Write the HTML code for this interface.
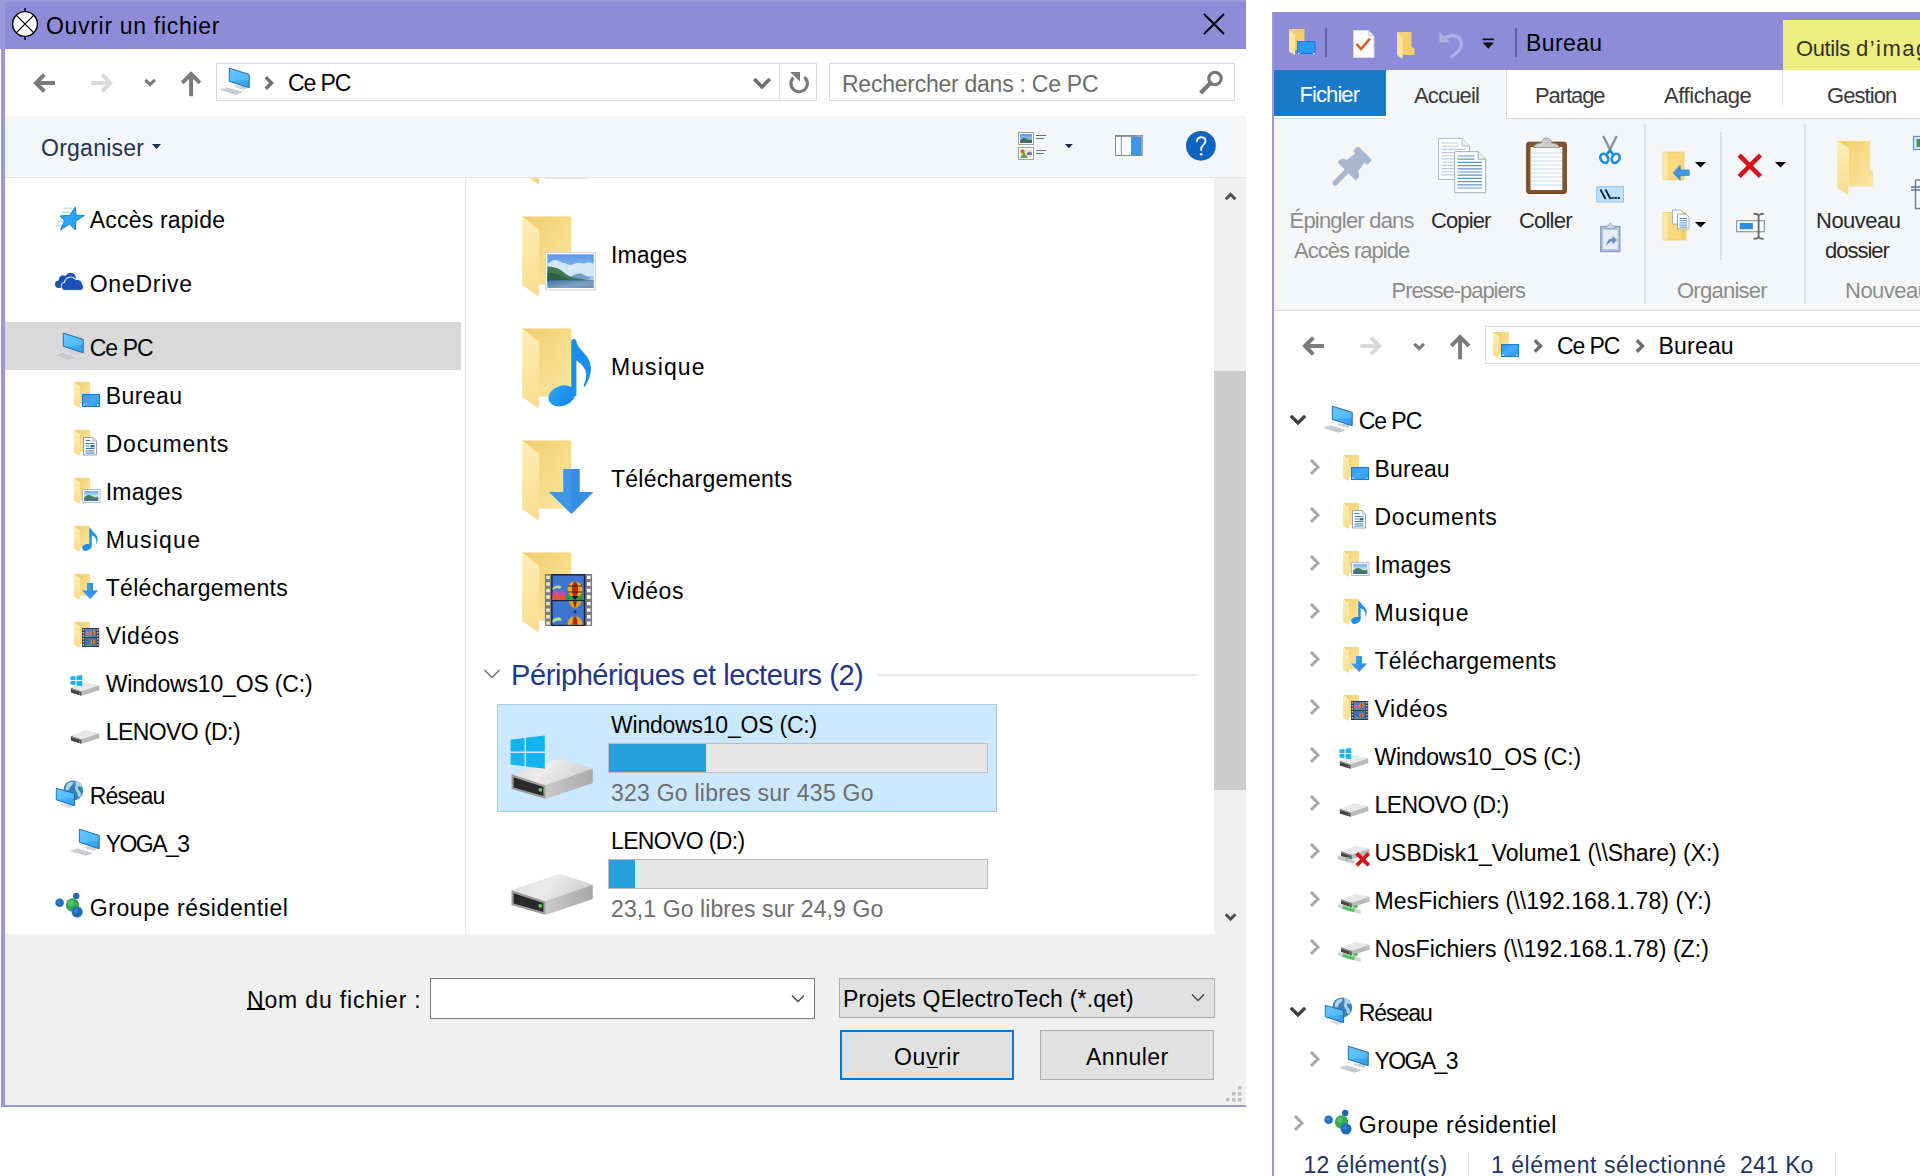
<!DOCTYPE html>
<html><head><meta charset="utf-8"><title>Ouvrir un fichier</title>
<style>
html,body{margin:0;padding:0;}
html{width:1920px;height:1176px;overflow:hidden;}
body{width:1920px;height:1176px;position:relative;overflow:hidden;background:#fff;
font-family:"Liberation Sans",sans-serif;}
div,span.t,svg{position:absolute;}
#root{left:0;top:0;width:1920px;height:1176px;overflow:hidden;}
span.t{white-space:pre;}
svg{overflow:visible;}
</style></head>
<body>
<div id="root">
<svg width="0" height="0" style="left:0;top:0"><defs>
<linearGradient id="gFold" x1="0" y1="0" x2="1" y2="1"><stop offset="0" stop-color="#f1cd6a"/><stop offset="1" stop-color="#fbe7a3"/></linearGradient>
<linearGradient id="gFlap" x1="0" y1="0" x2="0" y2="1"><stop offset="0" stop-color="#fdeeb6"/><stop offset="1" stop-color="#f8dc8c"/></linearGradient>
<linearGradient id="gMon" x1="0" y1="0" x2="1" y2="1"><stop offset="0" stop-color="#5cc4fb"/><stop offset="1" stop-color="#2a9bf0"/></linearGradient>
<linearGradient id="gDrv" x1="0" y1="0" x2="1" y2="0.300"><stop offset="0" stop-color="#dedede"/><stop offset="0.500" stop-color="#ebebeb"/><stop offset="1" stop-color="#d2d2d2"/></linearGradient>
<linearGradient id="gSky" x1="0" y1="0" x2="0" y2="1"><stop offset="0" stop-color="#5aa9e8"/><stop offset="0.5" stop-color="#cfe6f5"/><stop offset="1" stop-color="#3d6f8f"/></linearGradient>
<linearGradient id="gDesk" x1="0" y1="0" x2="1" y2="1"><stop offset="0" stop-color="#2a95f4"/><stop offset="0.500" stop-color="#43aafb"/><stop offset="1" stop-color="#2a95f4"/></linearGradient>
<linearGradient id="gSky2" x1="0" y1="0" x2="0" y2="1"><stop offset="0" stop-color="#5c98e6"/><stop offset="0.45" stop-color="#86b8f0"/><stop offset="1" stop-color="#b8d6f4"/></linearGradient>
<linearGradient id="gWater" x1="0" y1="0" x2="1" y2="1"><stop offset="0" stop-color="#3f73ad"/><stop offset="0.600" stop-color="#7fa1c4"/><stop offset="1" stop-color="#6a92bd"/></linearGradient>
<linearGradient id="gNote" x1="0" y1="0" x2="1" y2="1"><stop offset="0" stop-color="#2fa3f6"/><stop offset="1" stop-color="#0f86e6"/></linearGradient>
<linearGradient id="gDrvS" x1="0" y1="0" x2="1" y2="0"><stop offset="0" stop-color="#c9c9c9"/><stop offset="1" stop-color="#a9a9a9"/></linearGradient>
</defs></svg>
<div style="left:1px;top:0px;width:1245px;height:1107px;background:#9b98d6;"></div>
<div style="left:5px;top:48px;width:1241px;height:1057px;background:#fff;"></div>
<div style="left:0px;top:0px;width:1246px;height:49px;background:#8e8cd8;"></div>
<div style="left:0px;top:0px;width:1246px;height:2px;background:#9a97db;"></div>
<div style="left:0px;top:0px;width:5px;height:49px;background:#9a97db;"></div>
<svg style="left:9px;top:8px;" width="32" height="32" viewBox="0 0 32 32"><path d="M16 0v32" stroke="#1b1b50" stroke-width="2"/><circle cx="16" cy="16" r="12.400" fill="#fff" stroke="#000" stroke-width="1.400"/><path d="M7.400 7.400l17.200 17.200M24.600 7.400L7.400 24.600" stroke="#000" stroke-width="1.300"/></svg>
<span class="t" style="left:46.00px;top:12px;font-size:23px;line-height:29px;color:#000;letter-spacing:0.688px;">Ouvrir un fichier</span>
<svg style="left:1203px;top:13px;" width="22" height="22" viewBox="0 0 22 22"><path d="M1 1l20 20M21 1L1 21" stroke="#000" stroke-width="1.9"/></svg>
<svg style="left:32.9px;top:70.75px;" width="24" height="24" viewBox="0 0 24 24"><path d="M22 12H3.500M11.300 3.700L3 12l8.300 8.300" fill="none" stroke="#7a7a7a" stroke-width="4"/></svg>
<svg style="left:91.0px;top:70.75px;" width="24" height="24" viewBox="0 0 24 24"><path d="M0.300 12H18.800M11 3.700L19.300 12 11 20.300" fill="none" stroke="#d9d9d9" stroke-width="4"/></svg>
<svg style="left:143.9px;top:78.25px;" width="14" height="10" viewBox="0 0 14 10"><path d="M1.300 1.800L6.100 6.600l4.800-4.800" fill="none" stroke="#7a7a7a" stroke-width="3.200"/></svg>
<svg style="left:179.8px;top:70.75px;" width="24" height="26" viewBox="0 0 24 26"><path d="M11.100 25.200V3.500M2.300 11.800l8.800-8.800 8.800 8.800" fill="none" stroke="#7a7a7a" stroke-width="4"/></svg>
<div style="left:216px;top:63px;width:564px;height:38px;background:#fff;border:1px solid #d9d9d9;box-sizing:border-box;"></div>
<div style="left:780px;top:63px;width:37px;height:38px;background:#fff;border:1px solid #d9d9d9;border-left:none;box-sizing:border-box;"></div>
<svg style="left:221.5px;top:66px;" width="32" height="32" viewBox="0 0 32 32"><polygon points="-2.8,23.4 4.6,21 21.7,25.8 14.2,28.8" fill="#e6e8eb"/><path d="M-1 23.7l15 4.500M1.500 22.800l15 4.600M4 22l15 4.600M1 24.800l6.500-2.600M5 26l6.500-2.600M9 27.200l6.500-2.600M12.500 28.300l6.500-2.600" stroke="#b3b8bf" stroke-width="0.700"/><polygon points="19.500,19.200 23.500,20.400 23.500,23 19.500,21.800" fill="#c3c8ce"/><polygon points="12.800,20.600 16,19.600 24.500,22 21.300,23.400" fill="#d5d8dd" stroke="#b5bac1" stroke-width="0.500"/><polygon points="7.300,2.200 27.200,8.400 27.200,21.700 7.300,15.300" fill="url(#gMon)" stroke="#1d6cab" stroke-width="1"/><polygon points="7.800,3 26.700,8.900 26.700,14 7.800,15" fill="#7fd4ff" opacity="0.350"/></svg>
<svg style="left:263.7px;top:75px;" width="12" height="16" viewBox="0 0 12 16"><path d="M1.800 2.300L7.500 8l-5.700 5.700" fill="none" stroke="#6e6e6e" stroke-width="3.400"/></svg>
<span class="t" style="left:288.00px;top:69px;font-size:23px;line-height:29px;color:#000;letter-spacing:-1.125px;">Ce PC</span>
<svg style="left:752px;top:76px;" width="20" height="14" viewBox="0 0 20 14"><path d="M2.200 3l7.800 8 7.800-8" fill="none" stroke="#6e6e6e" stroke-width="3.600"/></svg>
<svg style="left:788px;top:70px;" width="24" height="24" viewBox="0 0 24 24"><path d="M16.300 6.900A8.300 8.300 0 1 1 5.300 7.600" fill="none" stroke="#7a7a7a" stroke-width="3.200"/><path d="M2 2h10v9.500z" fill="#7a7a7a"/></svg>
<div style="left:829px;top:63px;width:406px;height:38px;background:#fff;border:1px solid #d9d9d9;box-sizing:border-box;"></div>
<span class="t" style="left:842.00px;top:70px;font-size:23px;line-height:29px;color:#6d6d6d;letter-spacing:-0.250px;">Rechercher dans : Ce PC</span>
<svg style="left:1198px;top:70px;" width="26" height="26" viewBox="0 0 26 26"><circle cx="17" cy="8.500" r="6.200" fill="none" stroke="#787878" stroke-width="3.200"/><path d="M12.500 13L2.500 23" stroke="#787878" stroke-width="4"/></svg>
<div style="left:5px;top:116px;width:1241px;height:61px;background:#f5f6f7;"></div>
<div style="left:5px;top:177px;width:1241px;height:1px;background:#e3e4e6;"></div>
<span class="t" style="left:41.00px;top:134px;font-size:23px;line-height:29px;color:#1e3250;letter-spacing:0.250px;">Organiser</span>
<svg style="left:152px;top:144px;" width="9" height="5" viewBox="0 0 9 5"><path d="M0 0h9L4.500 5z" fill="#1e3250"/></svg>
<svg style="left:1018px;top:132px;" width="30" height="28" viewBox="0 0 30 28"><rect x="0.500" y="0.500" width="15" height="12" fill="#fff" stroke="#9aa0a8"/><rect x="2" y="2" width="12" height="9" fill="url(#gSky2)"/><path d="M2 8.500q3-4 6-2t6 1v3.500H2z" fill="#3f6f63"/><rect x="0.500" y="15.500" width="15" height="12" fill="#fff" stroke="#9aa0a8"/><rect x="2" y="17" width="12" height="9" fill="#e9e6c8"/><circle cx="4.500" cy="19.500" r="2" fill="#c9642b"/><path d="M2 26l4-6 4 6z" fill="#6fa34f"/><path d="M9 21l3-1.500 2 1.500v2h-5z" fill="#7a68b8"/><path d="M18 3.500h10M18 6.500h8M18 18.500h10M18 21.500h8" stroke="#707070" stroke-width="1"/></svg>
<svg style="left:1064.7px;top:143.9px;" width="8" height="5" viewBox="0 0 8 5"><path d="M0 0h7.800L3.900 4.300z" fill="#1b2a4a"/></svg>
<svg style="left:1115px;top:135px;" width="28" height="22" viewBox="0 0 28 22"><rect x="0.500" y="0.500" width="26.700" height="20" fill="#fff" stroke="#858a92" stroke-width="1"/><path d="M0 1h27.700" stroke="#858a92" stroke-width="1.800"/><path d="M6.300 1v20" stroke="#858a92" stroke-width="1"/><rect x="16" y="2" width="10.700" height="18" fill="#3f97e3"/><path d="M22 1h5" stroke="#dfe6ee" stroke-width="0.800" stroke-dasharray="1 0.700"/></svg>
<svg style="left:1186px;top:131px;" width="30" height="30" viewBox="0 0 30 30"><circle cx="14.900" cy="14.800" r="14.900" fill="#0f64c0"/><path d="M10.800 10.800c0-2.800 1.800-4.600 4.400-4.600 2.500 0 4.300 1.500 4.300 3.800 0 3.600-4.300 4.200-4.300 8v1.800" fill="none" stroke="#fff" stroke-width="1.900"/><circle cx="15.200" cy="23.300" r="1.350" fill="#fff"/></svg>
<div style="left:465px;top:178px;width:1px;height:756px;background:#ececec;"></div>
<div style="left:5px;top:322px;width:456px;height:48px;background:#d9d9d9;"></div>
<span class="t" style="left:89.70px;top:206px;font-size:23px;line-height:29px;color:#000;letter-spacing:0.209px;">Accès rapide</span>
<svg style="left:56px;top:203px;" width="32" height="32" viewBox="0 0 32 32"><path d="M8.300 5.300h9M6.500 9.500h8M2 18.400h6.500M0 22.400h6" stroke="#9fb4bd" stroke-width="0.900"/><path d="M8.300 5.300h9M6.500 9.500h8M2 18.400h6.500M0 22.400h6" stroke="#c8f2ff" stroke-width="2.600" opacity="0.500"/><polygon points="19.200,4.100 20,12.300 28.400,12.500 19.900,18.100 19.300,26.900 13.600,21.100 4.500,26.900 8.600,17.700 4.200,13 13.900,12.300" fill="#2aa5f5" stroke="#1d7fc8" stroke-width="1" stroke-linejoin="miter"/></svg>
<span class="t" style="left:89.70px;top:270px;font-size:23px;line-height:29px;color:#000;letter-spacing:0.757px;">OneDrive</span>
<svg style="left:56px;top:267px;" width="32" height="32" viewBox="0 0 32 32"><g fill="#1b50b5"><circle cx="2.700" cy="17.200" r="3.700"/><circle cx="7.200" cy="12.600" r="4.300"/><circle cx="14.500" cy="11" r="5.300"/><rect x="2.700" y="13" width="14" height="7.900"/></g><g fill="#e4f1fb" stroke="#e4f1fb" stroke-width="2"><circle cx="9.300" cy="19.300" r="3.600"/><circle cx="14.600" cy="16.400" r="5.800"/><circle cx="21.300" cy="17.600" r="4.600"/><circle cx="24" cy="20" r="2.900"/><rect x="9.300" y="18" width="14.700" height="4.900"/></g><g fill="#1b50b5"><circle cx="9.300" cy="19.300" r="3.600"/><circle cx="14.600" cy="16.400" r="5.800"/><circle cx="21.300" cy="17.600" r="4.600"/><circle cx="24" cy="20" r="2.900"/><rect x="9.300" y="18" width="14.700" height="4.900"/></g></svg>
<span class="t" style="left:89.70px;top:334px;font-size:23px;line-height:29px;color:#000;letter-spacing:-0.925px;">Ce PC</span>
<svg style="left:56px;top:331px;" width="32" height="32" viewBox="0 0 32 32"><polygon points="-2.8,23.4 4.6,21 21.7,25.8 14.2,28.8" fill="#e6e8eb"/><path d="M-1 23.7l15 4.500M1.500 22.800l15 4.600M4 22l15 4.600M1 24.800l6.500-2.600M5 26l6.500-2.600M9 27.200l6.500-2.600M12.500 28.300l6.500-2.600" stroke="#b3b8bf" stroke-width="0.700"/><polygon points="19.500,19.200 23.500,20.400 23.500,23 19.500,21.800" fill="#c3c8ce"/><polygon points="12.800,20.600 16,19.600 24.500,22 21.300,23.400" fill="#d5d8dd" stroke="#b5bac1" stroke-width="0.500"/><polygon points="7.300,2.200 27.200,8.400 27.200,21.700 7.300,15.300" fill="url(#gMon)" stroke="#1d6cab" stroke-width="1"/><polygon points="7.800,3 26.700,8.900 26.700,14 7.800,15" fill="#7fd4ff" opacity="0.350"/></svg>
<span class="t" style="left:105.70px;top:382px;font-size:23px;line-height:29px;color:#000;letter-spacing:0.460px;">Bureau</span>
<svg style="left:72px;top:379px;" width="32" height="32" viewBox="0 0 32 32"><polygon points="2,3 18,3 18,25 8,25 8,8" fill="url(#gFold)"/><polygon points="2,3 8,8.5 8,29 2,26" fill="url(#gFlap)"/><rect x="10.5" y="15.5" width="17" height="12" fill="url(#gDesk)" stroke="#157ad8" stroke-width="1"/><rect x="11.5" y="25.6" width="1.6" height="1" fill="#fff"/><rect x="25" y="25.6" width="1.6" height="1" fill="#fff"/></svg>
<span class="t" style="left:105.70px;top:430px;font-size:23px;line-height:29px;color:#000;letter-spacing:0.787px;">Documents</span>
<svg style="left:72px;top:427px;" width="32" height="32" viewBox="0 0 32 32"><polygon points="2,3 18,3 18,25 8,25 8,8" fill="url(#gFold)"/><polygon points="2,3 8,8.5 8,29 2,26" fill="url(#gFlap)"/><path d="M11.5 10.5h9.5l3.5 3.5v14h-13z" fill="#fff" stroke="#9aa3ad" stroke-width="1"/><path d="M21 10.5v3.5h3.5" fill="#e8ecf0" stroke="#9aa3ad" stroke-width="0.8"/><path d="M13.5 13.5h5M13.5 16.5h9M13.5 19h4M13.5 21.5h9M13.5 24h9M13.5 26h9" stroke="#3f7fbf" stroke-width="1"/><rect x="18.5" y="18" width="4" height="2.4" fill="#2b6cb5"/></svg>
<span class="t" style="left:105.70px;top:478px;font-size:23px;line-height:29px;color:#000;letter-spacing:0.260px;">Images</span>
<svg style="left:72px;top:475px;" width="32" height="32" viewBox="0 0 32 32"><polygon points="2,3 18,3 18,25 8,25 8,8" fill="url(#gFold)"/><polygon points="2,3 8,8.5 8,29 2,26" fill="url(#gFlap)"/><rect x="10.500" y="14.500" width="17.500" height="13" fill="#fff" stroke="#b5bcc4" stroke-width="1"/><rect x="12.200" y="16.200" width="14.100" height="9.600" fill="url(#gSky)"/><path d="M12.200 22.500q4-4 7.500-1.500t6.600.5v2.500h-14.100z" fill="#4d7d5b"/><rect x="12.200" y="23.900" width="14.100" height="1.900" fill="#3f6f96"/></svg>
<span class="t" style="left:105.70px;top:526px;font-size:23px;line-height:29px;color:#000;letter-spacing:1.217px;">Musique</span>
<svg style="left:72px;top:523px;" width="32" height="32" viewBox="0 0 32 32"><polygon points="2,3 18,3 18,25 8,25 8,8" fill="url(#gFold)"/><polygon points="2,3 8,8.5 8,29 2,26" fill="url(#gFlap)"/><ellipse cx="14.600" cy="24.300" rx="4.500" ry="3.300" transform="rotate(-22 14.600 24.300)" fill="#1e90ea"/><path d="M17.300 24.500V5.200c1.200 0 2 .3 2.400 1.600.7 2.200 3.800 3.600 5.300 6.600 1.300 2.800.6 5.400-1 7.600.6-2.500.6-4.600-.9-6.600-1.100-1.500-2.400-2-3.400-2.500v12.500z" fill="#1e90ea"/></svg>
<span class="t" style="left:105.70px;top:574px;font-size:23px;line-height:29px;color:#000;letter-spacing:0.307px;">Téléchargements</span>
<svg style="left:72px;top:571px;" width="32" height="32" viewBox="0 0 32 32"><polygon points="2,3 18,3 18,25 8,25 8,8" fill="url(#gFold)"/><polygon points="2,3 8,8.5 8,29 2,26" fill="url(#gFlap)"/><path d="M15 12h6v7.500h5L18 28l-8-8.500h5z" fill="#3f97ea"/><path d="M18 12h3v7.500h5L18 28z" fill="#3088e0" opacity="0.550"/></svg>
<span class="t" style="left:105.70px;top:622px;font-size:23px;line-height:29px;color:#000;letter-spacing:0.660px;">Vidéos</span>
<svg style="left:72px;top:619px;" width="32" height="32" viewBox="0 0 32 32"><polygon points="2,3 18,3 18,25 8,25 8,8" fill="url(#gFold)"/><polygon points="2,3 8,8.5 8,29 2,26" fill="url(#gFlap)"/><rect x="10" y="9" width="17.200" height="19" fill="#3a3a3a"/><rect x="12.800" y="10" width="11.600" height="8" fill="#4a7fd0"/><rect x="12.800" y="19" width="11.600" height="8" fill="#3e6fc4"/><path d="M12.800 14l2.500-2 2.500 2.500 2-1.500v3h-7z" fill="#c560c0"/><ellipse cx="20.500" cy="13.500" rx="2.200" ry="2.600" fill="#d9a520"/><ellipse cx="20.500" cy="13.500" rx="0.900" ry="2.600" fill="#c03030"/><ellipse cx="20.500" cy="23" rx="2.200" ry="2.600" fill="#d9a520"/><ellipse cx="20.500" cy="23" rx="0.900" ry="2.600" fill="#c03030"/><path d="M12.800 18q3-3 5.800-1t5.800 0v1z" fill="#5aa86a"/><path d="M12.800 27q3-3 5.800-1t5.800 0v1z" fill="#5aa86a"/><path d="M11.400 10v17.500M25.800 10v17.500" stroke="#cfcfcf" stroke-width="1.400" stroke-dasharray="1.600 1.400"/></svg>
<span class="t" style="left:105.70px;top:670px;font-size:23px;line-height:29px;color:#000;letter-spacing:-0.169px;">Windows10_OS (C:)</span>
<svg style="left:72px;top:667px;" width="32" height="32" viewBox="0 0 32 32"><g transform="translate(0.0 0.0)"><polygon points="-1.100,21 13.400,15.600 27.200,18.500 27.200,23 9.400,28.700 -1.100,25.500" fill="#c9c9c9"/><polygon points="-1.100,21 13.400,15.600 27.200,18.500 9.400,24.500" fill="#e8e8e8"/><polygon points="9.400,24.500 27.200,18.500 27.200,23 9.400,28.700" fill="#b9b9b9"/><polygon points="-1.100,21 9.400,24.500 9.400,28.700 -1.100,25.500" fill="#444"/><polygon points="-1.100,21 9.400,24.500 9.400,25.600 -1.100,22.100" fill="#9a9a9a"/><circle cx="7.600" cy="26.600" r="0.700" fill="#5fdc5f"/></g><g fill="#17b5ef"><polygon points="-1.500,9.600 3.500,8.900 3.500,13 -1.500,13"/><polygon points="4.500,8.800 10.200,8 10.200,13 4.500,13"/><polygon points="-1.500,14 3.500,14 3.500,18.200 -1.500,17.500"/><polygon points="4.500,14 10.200,14 10.200,19.200 4.500,18.400"/></g></svg>
<span class="t" style="left:105.70px;top:718px;font-size:23px;line-height:29px;color:#000;letter-spacing:-0.570px;">LENOVO (D:)</span>
<svg style="left:72px;top:715px;" width="32" height="32" viewBox="0 0 32 32"><g transform="translate(0.0 0.0)"><polygon points="-1.100,21 13.400,15.600 27.200,18.500 27.200,23 9.400,28.700 -1.100,25.500" fill="#c9c9c9"/><polygon points="-1.100,21 13.400,15.600 27.200,18.500 9.400,24.500" fill="#e8e8e8"/><polygon points="9.400,24.500 27.200,18.500 27.200,23 9.400,28.700" fill="#b9b9b9"/><polygon points="-1.100,21 9.400,24.500 9.400,28.700 -1.100,25.500" fill="#444"/><polygon points="-1.100,21 9.400,24.500 9.400,25.600 -1.100,22.100" fill="#9a9a9a"/><circle cx="7.600" cy="26.600" r="0.700" fill="#5fdc5f"/></g></svg>
<span class="t" style="left:89.70px;top:782px;font-size:23px;line-height:29px;color:#000;letter-spacing:-0.740px;">Réseau</span>
<svg style="left:56px;top:779px;" width="32" height="32" viewBox="0 0 32 32"><circle cx="17.200" cy="11.400" r="10" fill="#3a81b4"/><path d="M10.500 6c2.500-3 5-3.500 7-3 .5 2-1.500 3-3 4.500s-1 3.500-3 4-2.500-1.500-1-5.500zM19 2c3 0 6 2 7.500 5.500-1.500 1-2.500-.5-4 0s-.5 3 1 4.500 2 3 1 5-3 .5-3-2-2.500-3-2.500-5.500 1.500-3 0-7.500z" fill="#bfe2ef" opacity="0.850"/><polygon points="12.800,24.200 16.500,25.300 16.500,27 12.800,26" fill="#b9bfc6"/><polygon points="5,25.500 8,24.600 16.500,27.200 13.500,28.500" fill="#dcdfe3" stroke="#bfc4ca" stroke-width="0.500"/><polygon points="0.300,9.400 18.600,14.400 18.600,26.700 0.300,20.700" fill="url(#gMon)" stroke="#1d6cab" stroke-width="1"/><polygon points="0.800,10.100 18.100,14.900 18.100,19 0.800,20" fill="#7fd4ff" opacity="0.350"/></svg>
<span class="t" style="left:105.70px;top:830px;font-size:23px;line-height:29px;color:#000;letter-spacing:-1.540px;">YOGA_3</span>
<svg style="left:72px;top:827px;" width="32" height="32" viewBox="0 0 32 32"><polygon points="-2.8,23.4 4.6,21 21.7,25.8 14.2,28.8" fill="#e6e8eb"/><path d="M-1 23.7l15 4.500M1.500 22.800l15 4.600M4 22l15 4.600M1 24.800l6.500-2.600M5 26l6.500-2.600M9 27.200l6.500-2.600M12.500 28.300l6.500-2.600" stroke="#b3b8bf" stroke-width="0.700"/><polygon points="19.500,19.200 23.500,20.400 23.500,23 19.500,21.800" fill="#c3c8ce"/><polygon points="12.800,20.600 16,19.600 24.500,22 21.300,23.400" fill="#d5d8dd" stroke="#b5bac1" stroke-width="0.500"/><polygon points="7.300,2.200 27.200,8.400 27.200,21.700 7.300,15.300" fill="url(#gMon)" stroke="#1d6cab" stroke-width="1"/><polygon points="7.800,3 26.700,8.900 26.700,14 7.800,15" fill="#7fd4ff" opacity="0.350"/></svg>
<span class="t" style="left:89.70px;top:894px;font-size:23px;line-height:29px;color:#000;letter-spacing:0.606px;">Groupe résidentiel</span>
<svg style="left:56px;top:891px;" width="32" height="32" viewBox="0 0 32 32"><circle cx="20.200" cy="5" r="3.200" fill="#1d6ab8"/><circle cx="3.600" cy="11.800" r="4.300" fill="#1f6fbf"/><circle cx="16.600" cy="13.900" r="6.700" fill="#35a852"/><circle cx="15" cy="12" r="3" fill="#6fd07f" opacity="0.550"/><circle cx="21.100" cy="21" r="5.500" fill="#1d6ab8"/><circle cx="20" cy="19.500" r="2.200" fill="#4f93da" opacity="0.600"/><circle cx="2.800" cy="10.800" r="1.600" fill="#4f93da" opacity="0.600"/></svg>
<svg style="left:520px;top:178px;" width="80" height="10" viewBox="0 0 80 10"><polygon points="9.600,0 19,0 18.800,6.750" fill="#f6d984"/><rect x="25" y="0" width="44" height="1.300" fill="#e6e6e6"/></svg>
<span class="t" style="left:611.00px;top:241px;font-size:23px;line-height:29px;color:#000;letter-spacing:0.100px;">Images</span>
<svg style="left:520px;top:212px;" width="80" height="86" viewBox="0 0 80 86"><polygon points="2.100,4.600 51.300,4.600 51.300,72.800 19,72.800 19,18" fill="url(#gFold)"/><polygon points="2.100,4.600 19.500,18.300 18.800,84.750 2.100,72.800" fill="url(#gFlap)"/><rect x="25.500" y="40.500" width="50" height="37.500" fill="#fff" stroke="#cdd3d9" stroke-width="1"/><rect x="27.300" y="42.300" width="46.500" height="33.700" fill="url(#gSky2)"/><path d="M27.300 52c3-1 4-4 8-4s5 3 8 3 4 2 7 2 4-2 8-2 5 1 8 0 5 0 7.500 1v12h-46.500z" fill="#d3e8f8"/><path d="M52 64c3-2 7-3 10-2s6 3 9 5h-19z" fill="#6f9fc8"/><path d="M27.300 54.500c5 0 10 1 14 4s7 6 12 7 12 2 20.500 3.200v1.300h-46.500z" fill="#3f7a4f"/><path d="M27.300 61c6-1 12 2 17 4.500s10 2.500 29.500 3.200v1.300h-46.500z" fill="#2f5f43"/><rect x="27.300" y="68.300" width="46.500" height="7.700" fill="url(#gWater)"/></svg>
<span class="t" style="left:611.00px;top:353px;font-size:23px;line-height:29px;color:#000;letter-spacing:1.083px;">Musique</span>
<svg style="left:520px;top:324px;" width="80" height="86" viewBox="0 0 80 86"><polygon points="2.100,4.600 51.300,4.600 51.300,72.800 19,72.800 19,18" fill="url(#gFold)"/><polygon points="2.100,4.600 19.500,18.300 18.800,84.750 2.100,72.800" fill="url(#gFlap)"/><ellipse cx="41.800" cy="71.900" rx="13.700" ry="10" transform="rotate(-20 41.800 71.900)" fill="url(#gNote)"/><path d="M51.200 72V17.500a2.600 2.600 0 0 1 5.200 0c1.200 7.500 11.500 12 14 22.500 1.800 7.500-1 15-5.500 23l-1.500-1c3.200-6.500 3.800-12 1-17.500-2.200-4.300-5.500-6.500-8-8V72z" fill="#1790ee"/></svg>
<span class="t" style="left:611.00px;top:465px;font-size:23px;line-height:29px;color:#000;letter-spacing:0.250px;">Téléchargements</span>
<svg style="left:520px;top:436px;" width="80" height="86" viewBox="0 0 80 86"><polygon points="2.100,4.600 51.300,4.600 51.300,72.800 19,72.800 19,18" fill="url(#gFold)"/><polygon points="2.100,4.600 19.500,18.300 18.800,84.750 2.100,72.800" fill="url(#gFlap)"/><path d="M43.200 33.100h16.400V56h13.800L51.250 78.100 28.900 56h14.300z" fill="#3f97ea"/><path d="M51.250 33.100h8.350V56h13.800L51.250 78.100z" fill="#3088e0" opacity="0.600"/></svg>
<span class="t" style="left:611.00px;top:577px;font-size:23px;line-height:29px;color:#000;letter-spacing:0.500px;">Vidéos</span>
<svg style="left:520px;top:548px;" width="80" height="86" viewBox="0 0 80 86"><polygon points="2.100,4.600 51.300,4.600 51.300,72.800 19,72.800 19,18" fill="url(#gFold)"/><polygon points="2.100,4.600 19.500,18.300 18.800,84.750 2.100,72.800" fill="url(#gFlap)"/><rect x="24.900" y="26" width="47.200" height="52" fill="#7d7d7d"/><rect x="31.200" y="26" width="34.200" height="52" fill="#16233f"/><rect x="32.600" y="27.500" width="31.200" height="24.500" fill="#3f74d3"/><rect x="32.600" y="53.200" width="31.200" height="23.600" fill="#3f74d3"/><path d="M46 47q4-2 9-1.500t8.800 0v6.500H46z" fill="#2e9646"/><path d="M32.600 40c3-3 7-3 9-1l-2 2c-2-1-4-1-7 1z" fill="#b8e08a"/><path d="M32.600 44l3.500-3 3.500 4 3.500-3 2.500 3v7h-13z" fill="#c04fb4"/><path d="M32.600 48l3.500-3 3.500 4 3.500-3 2.500 3v3h-13z" fill="#e2553c"/><ellipse cx="55" cy="41.500" rx="7.500" ry="8" fill="#e3ad1a"/><ellipse cx="55" cy="41.500" rx="3" ry="8" fill="#b42424"/><path d="M48 38h14M48 44h14" stroke="#3a1414" stroke-width="1.600" opacity="0.600"/><path d="M51.500 48l3.500 4 3.500-4z" fill="#141414"/><path d="M48.500 53.200h13c-1 3.500-3.500 6-6.500 7.500-3-1.500-5.500-4-6.500-7.500z" fill="#d9a31a"/><path d="M53 53.200h4l-2 7.500z" fill="#8e1f1f"/><rect x="53.700" y="62.500" width="2.600" height="2.200" fill="#222"/><path d="M32.600 72c3-3 7-3 9-1l-1 2c-2-1-4-1-8 2z" fill="#b8e08a"/><path d="M47.500 76.800c0-5 3.500-8.500 7.500-8.500s7.500 3.500 7.500 8.500z" fill="#e3ad1a"/><path d="M52.500 76.800c0-5 1-8.500 2.500-8.500s2.500 3.500 2.500 8.500z" fill="#b42424"/><path d="M28.050 27.700v49" stroke="#f3e9b5" stroke-width="3.600" stroke-dasharray="3.400 3.150"/><path d="M68.750 27.700v49" stroke="#fff" stroke-width="3.600" stroke-dasharray="3.400 3.150"/></svg>
<svg style="left:483px;top:668px;" width="18" height="12" viewBox="0 0 18 12"><path d="M1.500 2l7.500 7.500L16.500 2" fill="none" stroke="#6e6e6e" stroke-width="1.500"/></svg>
<span class="t" style="left:511.00px;top:658px;font-size:29px;line-height:35px;color:#213689;letter-spacing:-0.411px;">Périphériques et lecteurs (2)</span>
<div style="left:878px;top:674px;width:321px;height:2px;background:#e4e6ea;"></div>
<div style="left:497px;top:704px;width:500px;height:108px;background:#cce8ff;border:1px solid #a6cbe8;box-sizing:border-box;"></div>
<svg style="left:508px;top:734px;" width="90" height="70" viewBox="0 0 90 70"><polygon points="3.600,40.300 51.500,24.200 84.700,34.800 84.700,49 37.400,64.700 3.600,55" fill="#c4c4c4"/><polygon points="3.600,40.300 51.500,24.200 84.700,34.800 37.400,51.400" fill="url(#gDrv)"/><polygon points="37.400,51.400 84.700,34.800 84.700,49 37.400,64.700" fill="url(#gDrvS)"/><polygon points="3.600,40.300 37.400,51.400 37.400,64.700 3.600,55" fill="#9c9c9c"/><polygon points="5.600,43.200 35.400,53 35.400,62 5.600,53.500" fill="#2a2a2a"/><circle cx="32.300" cy="55.800" r="1.900" fill="#3fe24a"/><g fill="#12b4ef"><polygon points="2.600,5.700 16.600,4 16.600,17.400 2.600,17.400"/><polygon points="18,3.850 36.800,1.600 36.800,17.400 18,17.400"/><polygon points="2.600,19 16.600,19 16.600,32.200 2.600,30.500"/><polygon points="18,19 36.800,19 36.800,34.800 18,32.400"/></g></svg>
<span class="t" style="left:611.00px;top:711px;font-size:23px;line-height:29px;color:#000;letter-spacing:-0.219px;">Windows10_OS (C:)</span>
<div style="left:608px;top:743px;width:380px;height:30px;background:#e6e6e6;border:1px solid #bcbcbc;box-sizing:border-box;"></div>
<div style="left:609px;top:744px;width:97px;height:28px;background:#26a0da;"></div>
<span class="t" style="left:611.00px;top:779px;font-size:23px;line-height:29px;color:#6d6d6d;letter-spacing:0.239px;">323 Go libres sur 435 Go</span>
<svg style="left:508px;top:850px;" width="90" height="70" viewBox="0 0 90 70"><polygon points="3.600,40.300 51.500,24.200 84.700,34.800 84.700,49 37.400,64.700 3.600,55" fill="#c4c4c4"/><polygon points="3.600,40.300 51.500,24.200 84.700,34.800 37.400,51.400" fill="url(#gDrv)"/><polygon points="37.400,51.400 84.700,34.800 84.700,49 37.400,64.700" fill="url(#gDrvS)"/><polygon points="3.600,40.300 37.400,51.400 37.400,64.700 3.600,55" fill="#9c9c9c"/><polygon points="5.600,43.200 35.400,53 35.400,62 5.600,53.500" fill="#2a2a2a"/><circle cx="32.300" cy="55.800" r="1.900" fill="#3fe24a"/></svg>
<span class="t" style="left:611.00px;top:827px;font-size:23px;line-height:29px;color:#000;letter-spacing:-0.650px;">LENOVO (D:)</span>
<div style="left:608px;top:859px;width:380px;height:30px;background:#e6e6e6;border:1px solid #bcbcbc;box-sizing:border-box;"></div>
<div style="left:609px;top:860px;width:26px;height:28px;background:#26a0da;"></div>
<span class="t" style="left:611.00px;top:895px;font-size:23px;line-height:29px;color:#6d6d6d;letter-spacing:0.100px;">23,1 Go libres sur 24,9 Go</span>
<div style="left:1214px;top:178px;width:32px;height:756px;background:#f0f0f0;"></div>
<div style="left:1214px;top:371px;width:32px;height:419px;background:#cdcdcd;"></div>
<svg style="left:1224px;top:190px;" width="14" height="11" viewBox="0 0 14 11"><path d="M1.700 9.300L6.600 4.400 11.500 9.300" fill="none" stroke="#505050" stroke-width="3"/></svg>
<svg style="left:1224px;top:912px;" width="14" height="11" viewBox="0 0 14 11"><path d="M1.700 2.200L6.600 7.100 11.500 2.200" fill="none" stroke="#505050" stroke-width="3"/></svg>
<div style="left:5px;top:934px;width:1241px;height:171px;background:#f0f0f0;"></div>
<span class="t" style="left:247.00px;top:986px;font-size:23px;line-height:29px;color:#000;letter-spacing:0.847px;">Nom du fichier :</span>
<div style="left:247.2px;top:1008.4px;width:17.8px;height:1.6px;background:#000;"></div>
<div style="left:430px;top:978px;width:385px;height:41px;background:#fff;border:1px solid #7a7a7a;box-sizing:border-box;"></div>
<svg style="left:791px;top:994px;" width="14" height="9" viewBox="0 0 14 9"><path d="M1 1.500l6 6 6-6" fill="none" stroke="#444" stroke-width="1.400"/></svg>
<div style="left:839px;top:978px;width:376px;height:40px;background:#e1e1e1;border:1px solid #adadad;box-sizing:border-box;"></div>
<span class="t" style="left:843.00px;top:985px;font-size:23px;line-height:29px;color:#000;letter-spacing:0.204px;">Projets QElectroTech (*.qet)</span>
<svg style="left:1191px;top:993px;" width="14" height="9" viewBox="0 0 14 9"><path d="M1 1.500l6 6 6-6" fill="none" stroke="#444" stroke-width="1.400"/></svg>
<div style="left:840px;top:1030px;width:174px;height:50px;background:#e1e1e1;border:2px solid #0078d7;box-sizing:border-box;"></div>
<span class="t" style="left:894.00px;top:1043px;font-size:23px;line-height:29px;color:#000;letter-spacing:0.600px;">Ouvrir</span>
<div style="left:926.5px;top:1066.5px;width:11.5px;height:1.5px;background:#000;"></div>
<div style="left:1040px;top:1030px;width:174px;height:50px;background:#e1e1e1;border:1px solid #adadad;box-sizing:border-box;"></div>
<span class="t" style="left:1086.00px;top:1043px;font-size:23px;line-height:29px;color:#000;letter-spacing:0.500px;">Annuler</span>
<svg style="left:1226px;top:1086px;" width="16" height="16" viewBox="0 0 16 16"><rect x="12" y="0" width="3.500" height="3.500" fill="#bfbfbf"/><rect x="6" y="6" width="3.500" height="3.500" fill="#bfbfbf"/><rect x="12" y="6" width="3.500" height="3.500" fill="#bfbfbf"/><rect x="0" y="12" width="3.500" height="3.500" fill="#bfbfbf"/><rect x="6" y="12" width="3.500" height="3.500" fill="#bfbfbf"/><rect x="12" y="12" width="3.500" height="3.500" fill="#bfbfbf"/></svg>
<div style="left:1272px;top:12px;width:648px;height:1164px;background:#9b98d6;"></div>
<div style="left:1274px;top:70px;width:646px;height:1106px;background:#fff;"></div>
<div style="left:1274px;top:12px;width:646px;height:58px;background:#8e8cd8;"></div>
<svg style="left:1288px;top:28px;" width="30" height="30" viewBox="0 0 30 30"><polygon points="1,1 16.500,1 16.500,22 7,22 7,6" fill="#f2cf6c"/><polygon points="1,1 7,6 7,27 1,23.500" fill="#fbe6a0"/><rect x="9.500" y="13.500" width="17.500" height="12" fill="#2d97f5" stroke="#1677d4"/><path d="M10 25.500h17" stroke="#fff" stroke-width="1" stroke-dasharray="1.500 13.500 1.500 0"/></svg>
<div style="left:1325px;top:28px;width:2px;height:29px;background:#625ea6;"></div>
<svg style="left:1353px;top:30px;" width="22" height="28" viewBox="0 0 22 28"><path d="M0.500 0.500h15l5.500 5.500v21.500h-20.500z" fill="#fdfdfd" stroke="#d6d6e2"/><path d="M15.500 0.500v5.500h5.500z" fill="#e4e4ea" stroke="#c9c9d6" stroke-width="0.800"/><path d="M3.500 14l4.500 5 9-10.500" fill="none" stroke="#e0592a" stroke-width="2.500"/></svg>
<svg style="left:1396px;top:31px;" width="22" height="29" viewBox="0 0 22 29"><polygon points="1,1 15.500,1 15.500,16 18.500,17.500 18.500,24 6,24 6,6" fill="#f2cf6c"/><polygon points="1,1 6.500,6 6.500,28 1,24" fill="#fbe6a0"/></svg>
<svg style="left:1438px;top:31px;" width="27" height="28" viewBox="0 0 27 28"><path d="M4.500 8c3-2 6.500-3.300 10.500-3.300 5 0 8.500 3.800 8.500 8.600 0 5.200-5 9.200-11 13.200" fill="none" stroke="#b0aee2" stroke-width="3.200"/><path d="M1.500 0.800v10.500h10.500z" fill="#b0aee2"/></svg>
<svg style="left:1482px;top:38px;" width="12" height="11" viewBox="0 0 12 11"><rect x="0.500" y="0.500" width="11.500" height="1.700" fill="#111"/><path d="M0.500 4.500h11.500L6.250 10.700z" fill="#111"/></svg>
<div style="left:1515px;top:28px;width:2px;height:29px;background:#625ea6;"></div>
<span class="t" style="left:1526.00px;top:29px;font-size:23px;line-height:29px;color:#000;letter-spacing:0.400px;">Bureau</span>
<div style="left:1783px;top:20px;width:137px;height:50px;background:#eeee80;"></div>
<span class="t" style="left:1796.00px;top:35px;font-size:22px;line-height:28px;color:#33331f;letter-spacing:-0.400px;">Outils</span>
<span class="t" style="left:1856.00px;top:35px;font-size:22px;line-height:28px;color:#33331f;letter-spacing:1.500px;">d’image</span>
<div style="left:1274px;top:70px;width:646px;height:47px;background:#fff;"></div>
<div style="left:1274px;top:70px;width:112px;height:46px;background:#1979ca;"></div>
<span class="t" style="left:1299.50px;top:81px;font-size:22px;line-height:28px;color:#fff;letter-spacing:-0.917px;">Fichier</span>
<div style="left:1386px;top:70px;width:121px;height:49px;background:#f5f6f7;border-right:1px solid #dadbdc;box-sizing:border-box;"></div>
<div style="left:1274px;top:118px;width:112px;height:1px;background:#dadbdc;"></div>
<span class="t" style="left:1414.00px;top:82px;font-size:22px;line-height:28px;color:#3a3a3a;letter-spacing:-0.833px;">Accueil</span>
<span class="t" style="left:1535.00px;top:82px;font-size:22px;line-height:28px;color:#3a3a3a;letter-spacing:-1.083px;">Partage</span>
<span class="t" style="left:1664.00px;top:82px;font-size:22px;line-height:28px;color:#3a3a3a;letter-spacing:-0.438px;">Affichage</span>
<span class="t" style="left:1827.00px;top:82px;font-size:22px;line-height:28px;color:#3a3a3a;letter-spacing:-0.917px;">Gestion</span>
<div style="left:1782px;top:70px;width:1px;height:36px;background:#e9e9d0;"></div>
<div style="left:1274px;top:119px;width:646px;height:191px;background:#f5f6f7;"></div>
<div style="left:1507px;top:118px;width:413px;height:1px;background:#dadbdc;"></div>
<div style="left:1274px;top:310px;width:646px;height:1px;background:#dadbdc;"></div>
<svg style="left:1365.25px;top:152.5px;" width="2" height="2" viewBox="0 0 2 2"><g transform="rotate(45)" fill="#a8b6ce"><path d="M-8.500 0h17a1.500 1.500 0 0 1 1.500 1.500v4a1.500 1.500 0 0 1-1.500 1.500h-2l1.500 11c3 .5 5 2.500 5 5.500v2.500h-10.400v16.500a2.600 2.600 0 0 1-5.200 0v-16.500h-10.400v-2.500c0-3 2-5 5-5.500l1.500-11h-2a1.500 1.500 0 0 1-1.500-1.500v-4a1.500 1.500 0 0 1 1.500-1.500z"/></g></svg>
<span class="t" style="left:1289.50px;top:207px;font-size:22px;line-height:28px;color:#8c8c8c;letter-spacing:-0.792px;">Épingler dans</span>
<span class="t" style="left:1294.00px;top:237px;font-size:22px;line-height:28px;color:#8c8c8c;letter-spacing:-1.000px;">Accès rapide</span>
<svg style="left:1438px;top:138px;" width="48" height="56" viewBox="0 0 48 56"><path d="M0.500 0.500h23.500l7.500 7.500v33.500h-31z" fill="#fff" stroke="#b4bac2"/><path d="M24 0.500v7.500h7.500" fill="#eceff2" stroke="#b4bac2"/><path d="M3.500 5h17M3.500 8.200h17M3.500 11.400h24M3.500 14.600h24M3.500 17.800h24M3.500 21h24M3.500 24.200h24M3.500 27.400h24M3.500 30.600h24M3.500 33.800h24M3.500 37h24" stroke="#b9cbe8" stroke-width="1.100"/><path d="M16.700 13.700h23.500l7.500 7.500v33.500h-31z" fill="#fff" stroke="#a3aab3"/><path d="M40.200 13.700v7.500h7.500" fill="#eceff2" stroke="#a3aab3"/><path d="M19.500 18h17M19.500 21.200h17M19.500 24.400h24.500M19.500 27.600h24.500M19.500 30.800h24.500M19.500 34h24.500M19.500 37.200h24.500M19.500 40.400h24.500M19.500 43.600h24.500M19.500 46.800h24.500M19.500 50h24.500" stroke="#5f93d6" stroke-width="1.200"/></svg>
<span class="t" style="left:1431.00px;top:207px;font-size:22px;line-height:28px;color:#2b2b2b;letter-spacing:-0.900px;">Copier</span>
<svg style="left:1526px;top:137px;" width="42" height="58" viewBox="0 0 42 58"><rect x="0.700" y="5.200" width="39.600" height="51.300" rx="2.200" fill="#84532a" stroke="#6a3f17"/><rect x="4.500" y="10" width="31.800" height="43" fill="#fdfdfd"/><path d="M5 16h31M5 20h31M5 24h31M5 28h31M5 32h31M5 36h31M5 40h31M5 44h31M5 48h31" stroke="#c9dbee" stroke-width="1.100"/><path d="M7.500 10.500c1-3 4-4.500 8-4.500 0-2.500 2-5 5-5s5 2.500 5 5c4 0 7 1.500 8 4.500z" fill="#cfcfcf" stroke="#8d8d8d" stroke-width="0.900"/><circle cx="20.500" cy="4.600" r="1.500" fill="#f5f6f7" stroke="#8d8d8d" stroke-width="0.700"/></svg>
<span class="t" style="left:1519.00px;top:207px;font-size:22px;line-height:28px;color:#2b2b2b;letter-spacing:-0.800px;">Coller</span>
<svg style="left:1599px;top:135px;" width="22" height="30" viewBox="0 0 22 30"><path d="M4.300 1l8.200 16.500M17.700 1L9.500 17.500" stroke="#8d9299" stroke-width="2.400"/><ellipse cx="5.300" cy="23.300" rx="3.700" ry="4.800" transform="rotate(-30 5.300 23.300)" fill="none" stroke="#1f8dd8" stroke-width="2.700"/><ellipse cx="16.700" cy="23.300" rx="3.700" ry="4.800" transform="rotate(30 16.700 23.300)" fill="none" stroke="#1f8dd8" stroke-width="2.700"/><path d="M7.800 19.300l3.200-3.800 3.200 3.800" stroke="#1f8dd8" stroke-width="2.600" fill="none"/></svg>
<svg style="left:1596px;top:186px;" width="28" height="17" viewBox="0 0 28 17"><rect x="0.700" y="0.700" width="26.800" height="15.300" fill="#bfe0fb" stroke="#94c6f0"/><path d="M4.500 3.500l5 9.500M9.500 3.500l5 9.500" stroke="#0d1f3a" stroke-width="1.800"/><path d="M15.500 12h8.500" stroke="#0d1f3a" stroke-width="2.200" stroke-dasharray="2.200 0.900"/></svg>
<svg style="left:1600px;top:222px;" width="21" height="31" viewBox="0 0 21 31"><rect x="0.800" y="4.500" width="19" height="25" fill="#b6c6df" stroke="#859dc2" stroke-width="1.400"/><rect x="3.200" y="8" width="14.200" height="19" fill="#e6edf6"/><path d="M6 6.500c0-2 1.500-3 3-3 0-1.500.700-2.500 1.500-2.500s1.500 1 1.500 2.500c1.500 0 3 1 3 3z" fill="#cfd9e8" stroke="#8ea3bf" stroke-width="0.800"/><path d="M6.500 24c0-5.500 2.500-7.500 6-7.500v-3l4.500 4.500-4.500 4.500v-3c-2.500 0-4.500 1.500-6 4.500z" fill="#6f8fbe"/></svg>
<div style="left:1644px;top:124px;width:2px;height:180px;background:#e2e3e5;"></div>
<svg style="left:1662px;top:151px;" width="30" height="32" viewBox="0 0 30 32"><rect x="1" y="1.200" width="21" height="27.500" fill="#f7da7f" stroke="#f0c85a" stroke-width="0.800"/><rect x="1" y="1.200" width="4.500" height="27.500" fill="#fbe7a3"/><path d="M27.200 19h-9v-4.800l-7 7.600 7 7.600v-4.800h9z" fill="#3f97e3" stroke="#2a7fcd" stroke-width="0.700"/></svg>
<svg style="left:1694.5px;top:162px;" width="11" height="6" viewBox="0 0 11 6"><path d="M0 0h11L5.500 5.600z" fill="#000"/></svg>
<svg style="left:1662px;top:209px;" width="30" height="32" viewBox="0 0 30 32"><rect x="1" y="3.400" width="23" height="27.500" fill="#f7da7f" stroke="#f0c85a" stroke-width="0.800"/><rect x="1" y="3.400" width="4.500" height="27.500" fill="#fbe7a3"/><rect x="19" y="21" width="4.500" height="9.500" fill="#f3cf68"/><path d="M10.500 1h8l3 3v11h-11z" fill="#fff" stroke="#9aa2ab" stroke-width="0.800"/><path d="M15.500 5h8.500l3 3v12h-11.500z" fill="#fff" stroke="#8e979f" stroke-width="0.800"/><path d="M17.500 9.500h7.500M17.500 11.700h7.500M17.500 13.900h7.500M17.500 16.100h7.500M17.500 18.200h7.500" stroke="#5b8fd1" stroke-width="1"/></svg>
<svg style="left:1694.5px;top:221.5px;" width="11" height="6" viewBox="0 0 11 6"><path d="M0 0h11L5.500 5.600z" fill="#000"/></svg>
<div style="left:1719.5px;top:132px;width:2.5px;height:128px;background:#dfe0e2;"></div>
<svg style="left:1737px;top:153px;" width="26" height="26" viewBox="0 0 26 26"><path d="M2.200 2.200l21.200 21.200M23.400 2.200L2.200 23.400" stroke="#d8111d" stroke-width="4.600"/></svg>
<svg style="left:1775px;top:162px;" width="11" height="6" viewBox="0 0 11 6"><path d="M0 0h11L5.500 5.600z" fill="#000"/></svg>
<svg style="left:1735.5px;top:213px;" width="30" height="27" viewBox="0 0 30 27"><rect x="0.700" y="7.700" width="27.600" height="11" fill="#fff" stroke="#8c96a3" stroke-width="1.200"/><rect x="3.700" y="9.900" width="13.200" height="6.300" fill="#2f8de4"/><path d="M22.600 1v24.500M17.500 0.800c2.500 0 5.100 .5 5.100 2.500 0-2 2.600-2.500 5.100-2.500M17.500 25.800c2.500 0 5.100-.5 5.100-2.500 0 2 2.600 2.500 5.100 2.500" stroke="#6b6b6b" stroke-width="1.900" fill="none"/></svg>
<div style="left:1804px;top:124px;width:2px;height:180px;background:#e2e3e5;"></div>
<svg style="left:1836px;top:139px;" width="40" height="58" viewBox="0 0 40 58"><polygon points="1.200,2 34,2 34,31 37,33 37,47.500 12.500,47.500 12.500,9" fill="url(#gFold)"/><polygon points="1.200,2 13.300,9 12.200,56.200 1.200,48.800" fill="url(#gFlap)"/></svg>
<span class="t" style="left:1816.00px;top:207px;font-size:22px;line-height:28px;color:#2b2b2b;letter-spacing:-0.500px;">Nouveau</span>
<span class="t" style="left:1825.00px;top:237px;font-size:22px;line-height:28px;color:#2b2b2b;letter-spacing:-1.000px;">dossier</span>
<svg style="left:1913px;top:136px;" width="8" height="14" viewBox="0 0 8 14"><rect x="0.500" y="0.500" width="10" height="13" fill="#d3e6f8" stroke="#5f97d3" stroke-width="1.200"/><rect x="3.500" y="3" width="5" height="8" fill="#5a8a5a"/></svg>
<svg style="left:1911px;top:179px;" width="10" height="30" viewBox="0 0 10 30"><path d="M0 8h10M0 11h10" stroke="#4a78b5" stroke-width="1.300"/><path d="M4.500 1h6M4.500 1v28.500h6" stroke="#767c86" stroke-width="1.400" fill="none"/></svg>
<span class="t" style="left:1391.50px;top:277px;font-size:22px;line-height:28px;color:#8c8c8c;letter-spacing:-1.038px;">Presse-papiers</span>
<span class="t" style="left:1677.00px;top:277px;font-size:22px;line-height:28px;color:#8c8c8c;letter-spacing:-0.750px;">Organiser</span>
<span class="t" style="left:1845.00px;top:277px;font-size:22px;line-height:28px;color:#8c8c8c;letter-spacing:-0.500px;">Nouveau</span>
<svg style="left:1302px;top:334.25px;" width="24" height="24" viewBox="0 0 24 24"><path d="M22 12H3.500M11.300 3.700L3 12l8.300 8.300" fill="none" stroke="#7a7a7a" stroke-width="4"/></svg>
<svg style="left:1360.1px;top:334.25px;" width="24" height="24" viewBox="0 0 24 24"><path d="M0.300 12H18.800M11 3.700L19.300 12 11 20.300" fill="none" stroke="#d9d9d9" stroke-width="4"/></svg>
<svg style="left:1413px;top:341.75px;" width="14" height="10" viewBox="0 0 14 10"><path d="M1.300 1.800L6.100 6.600l4.800-4.800" fill="none" stroke="#7a7a7a" stroke-width="3.200"/></svg>
<svg style="left:1448.9px;top:334.25px;" width="24" height="26" viewBox="0 0 24 26"><path d="M11.100 25.200V3.500M2.300 11.800l8.800-8.800 8.800 8.800" fill="none" stroke="#7a7a7a" stroke-width="4"/></svg>
<div style="left:1485px;top:326px;width:440px;height:38px;background:#fff;border:1px solid #d9d9d9;box-sizing:border-box;"></div>
<svg style="left:1491px;top:329px;" width="32" height="32" viewBox="0 0 32 32"><polygon points="2,3 18,3 18,25 8,25 8,8" fill="url(#gFold)"/><polygon points="2,3 8,8.5 8,29 2,26" fill="url(#gFlap)"/><rect x="10.5" y="15.5" width="17" height="12" fill="url(#gDesk)" stroke="#157ad8" stroke-width="1"/><rect x="11.5" y="25.6" width="1.6" height="1" fill="#fff"/><rect x="25" y="25.6" width="1.6" height="1" fill="#fff"/></svg>
<svg style="left:1532.5px;top:338.2px;" width="12" height="16" viewBox="0 0 12 16"><path d="M1.800 2.300L7.500 8l-5.700 5.700" fill="none" stroke="#6e6e6e" stroke-width="3.400"/></svg>
<span class="t" style="left:1557.00px;top:332px;font-size:23px;line-height:29px;color:#000;letter-spacing:-1.125px;">Ce PC</span>
<svg style="left:1635px;top:338.2px;" width="12" height="16" viewBox="0 0 12 16"><path d="M1.800 2.300L7.500 8l-5.700 5.700" fill="none" stroke="#6e6e6e" stroke-width="3.400"/></svg>
<span class="t" style="left:1658.50px;top:332px;font-size:23px;line-height:29px;color:#000;letter-spacing:0.200px;">Bureau</span>
<span class="t" style="left:1358.80px;top:407px;font-size:23px;line-height:29px;color:#000;letter-spacing:-1.075px;">Ce PC</span>
<svg style="left:1324.7px;top:404px;" width="32" height="32" viewBox="0 0 32 32"><polygon points="-2.8,23.4 4.6,21 21.7,25.8 14.2,28.8" fill="#e6e8eb"/><path d="M-1 23.7l15 4.500M1.500 22.800l15 4.600M4 22l15 4.600M1 24.800l6.500-2.600M5 26l6.500-2.600M9 27.200l6.500-2.600M12.500 28.300l6.500-2.600" stroke="#b3b8bf" stroke-width="0.700"/><polygon points="19.500,19.200 23.500,20.400 23.500,23 19.500,21.800" fill="#c3c8ce"/><polygon points="12.800,20.600 16,19.600 24.500,22 21.300,23.400" fill="#d5d8dd" stroke="#b5bac1" stroke-width="0.500"/><polygon points="7.300,2.200 27.200,8.400 27.200,21.700 7.300,15.300" fill="url(#gMon)" stroke="#1d6cab" stroke-width="1"/><polygon points="7.800,3 26.700,8.900 26.700,14 7.800,15" fill="#7fd4ff" opacity="0.350"/></svg>
<svg style="left:1289px;top:414px;" width="18" height="12" viewBox="0 0 18 12"><path d="M1.800 1.800l7.200 7.200 7.200-7.200" fill="none" stroke="#3c3c3c" stroke-width="3.200"/></svg>
<span class="t" style="left:1374.50px;top:455px;font-size:23px;line-height:29px;color:#000;letter-spacing:0.200px;">Bureau</span>
<svg style="left:1340.9px;top:452px;" width="32" height="32" viewBox="0 0 32 32"><polygon points="2,3 18,3 18,25 8,25 8,8" fill="url(#gFold)"/><polygon points="2,3 8,8.5 8,29 2,26" fill="url(#gFlap)"/><rect x="10.5" y="15.5" width="17" height="12" fill="url(#gDesk)" stroke="#157ad8" stroke-width="1"/><rect x="11.5" y="25.6" width="1.6" height="1" fill="#fff"/><rect x="25" y="25.6" width="1.6" height="1" fill="#fff"/></svg>
<svg style="left:1309px;top:458px;" width="12" height="18" viewBox="0 0 12 18"><path d="M2 2l7 7-7 7" fill="none" stroke="#a3a3a3" stroke-width="2.900"/></svg>
<span class="t" style="left:1374.50px;top:503px;font-size:23px;line-height:29px;color:#000;letter-spacing:0.750px;">Documents</span>
<svg style="left:1340.9px;top:500px;" width="32" height="32" viewBox="0 0 32 32"><polygon points="2,3 18,3 18,25 8,25 8,8" fill="url(#gFold)"/><polygon points="2,3 8,8.5 8,29 2,26" fill="url(#gFlap)"/><path d="M11.5 10.5h9.5l3.5 3.5v14h-13z" fill="#fff" stroke="#9aa3ad" stroke-width="1"/><path d="M21 10.5v3.5h3.5" fill="#e8ecf0" stroke="#9aa3ad" stroke-width="0.8"/><path d="M13.5 13.5h5M13.5 16.5h9M13.5 19h4M13.5 21.5h9M13.5 24h9M13.5 26h9" stroke="#3f7fbf" stroke-width="1"/><rect x="18.5" y="18" width="4" height="2.4" fill="#2b6cb5"/></svg>
<svg style="left:1309px;top:506px;" width="12" height="18" viewBox="0 0 12 18"><path d="M2 2l7 7-7 7" fill="none" stroke="#a3a3a3" stroke-width="2.900"/></svg>
<span class="t" style="left:1374.50px;top:551px;font-size:23px;line-height:29px;color:#000;letter-spacing:0.200px;">Images</span>
<svg style="left:1340.9px;top:548px;" width="32" height="32" viewBox="0 0 32 32"><polygon points="2,3 18,3 18,25 8,25 8,8" fill="url(#gFold)"/><polygon points="2,3 8,8.5 8,29 2,26" fill="url(#gFlap)"/><rect x="10.500" y="14.500" width="17.500" height="13" fill="#fff" stroke="#b5bcc4" stroke-width="1"/><rect x="12.200" y="16.200" width="14.100" height="9.600" fill="url(#gSky)"/><path d="M12.200 22.500q4-4 7.500-1.500t6.600.5v2.500h-14.100z" fill="#4d7d5b"/><rect x="12.200" y="23.900" width="14.100" height="1.900" fill="#3f6f96"/></svg>
<svg style="left:1309px;top:554px;" width="12" height="18" viewBox="0 0 12 18"><path d="M2 2l7 7-7 7" fill="none" stroke="#a3a3a3" stroke-width="2.900"/></svg>
<span class="t" style="left:1374.50px;top:599px;font-size:23px;line-height:29px;color:#000;letter-spacing:1.167px;">Musique</span>
<svg style="left:1340.9px;top:596px;" width="32" height="32" viewBox="0 0 32 32"><polygon points="2,3 18,3 18,25 8,25 8,8" fill="url(#gFold)"/><polygon points="2,3 8,8.5 8,29 2,26" fill="url(#gFlap)"/><ellipse cx="14.600" cy="24.300" rx="4.500" ry="3.300" transform="rotate(-22 14.600 24.300)" fill="#1e90ea"/><path d="M17.300 24.500V5.200c1.200 0 2 .3 2.400 1.600.7 2.200 3.800 3.600 5.300 6.600 1.300 2.800.6 5.400-1 7.600.6-2.500.6-4.600-.9-6.600-1.100-1.500-2.400-2-3.400-2.500v12.500z" fill="#1e90ea"/></svg>
<svg style="left:1309px;top:602px;" width="12" height="18" viewBox="0 0 12 18"><path d="M2 2l7 7-7 7" fill="none" stroke="#a3a3a3" stroke-width="2.900"/></svg>
<span class="t" style="left:1374.50px;top:647px;font-size:23px;line-height:29px;color:#000;letter-spacing:0.286px;">Téléchargements</span>
<svg style="left:1340.9px;top:644px;" width="32" height="32" viewBox="0 0 32 32"><polygon points="2,3 18,3 18,25 8,25 8,8" fill="url(#gFold)"/><polygon points="2,3 8,8.5 8,29 2,26" fill="url(#gFlap)"/><path d="M15 12h6v7.500h5L18 28l-8-8.500h5z" fill="#3f97ea"/><path d="M18 12h3v7.500h5L18 28z" fill="#3088e0" opacity="0.550"/></svg>
<svg style="left:1309px;top:650px;" width="12" height="18" viewBox="0 0 12 18"><path d="M2 2l7 7-7 7" fill="none" stroke="#a3a3a3" stroke-width="2.900"/></svg>
<span class="t" style="left:1374.50px;top:695px;font-size:23px;line-height:29px;color:#000;letter-spacing:0.600px;">Vidéos</span>
<svg style="left:1340.9px;top:692px;" width="32" height="32" viewBox="0 0 32 32"><polygon points="2,3 18,3 18,25 8,25 8,8" fill="url(#gFold)"/><polygon points="2,3 8,8.5 8,29 2,26" fill="url(#gFlap)"/><rect x="10" y="9" width="17.200" height="19" fill="#3a3a3a"/><rect x="12.800" y="10" width="11.600" height="8" fill="#4a7fd0"/><rect x="12.800" y="19" width="11.600" height="8" fill="#3e6fc4"/><path d="M12.800 14l2.500-2 2.500 2.500 2-1.500v3h-7z" fill="#c560c0"/><ellipse cx="20.500" cy="13.500" rx="2.200" ry="2.600" fill="#d9a520"/><ellipse cx="20.500" cy="13.500" rx="0.900" ry="2.600" fill="#c03030"/><ellipse cx="20.500" cy="23" rx="2.200" ry="2.600" fill="#d9a520"/><ellipse cx="20.500" cy="23" rx="0.900" ry="2.600" fill="#c03030"/><path d="M12.800 18q3-3 5.800-1t5.800 0v1z" fill="#5aa86a"/><path d="M12.800 27q3-3 5.800-1t5.800 0v1z" fill="#5aa86a"/><path d="M11.400 10v17.500M25.800 10v17.500" stroke="#cfcfcf" stroke-width="1.400" stroke-dasharray="1.600 1.400"/></svg>
<svg style="left:1309px;top:698px;" width="12" height="18" viewBox="0 0 12 18"><path d="M2 2l7 7-7 7" fill="none" stroke="#a3a3a3" stroke-width="2.900"/></svg>
<span class="t" style="left:1374.50px;top:743px;font-size:23px;line-height:29px;color:#000;letter-spacing:-0.188px;">Windows10_OS (C:)</span>
<svg style="left:1340.9px;top:740px;" width="32" height="32" viewBox="0 0 32 32"><g transform="translate(0.0 0.0)"><polygon points="-1.100,21 13.400,15.600 27.200,18.500 27.200,23 9.400,28.700 -1.100,25.500" fill="#c9c9c9"/><polygon points="-1.100,21 13.400,15.600 27.200,18.500 9.400,24.500" fill="#e8e8e8"/><polygon points="9.400,24.500 27.200,18.500 27.200,23 9.400,28.700" fill="#b9b9b9"/><polygon points="-1.100,21 9.400,24.500 9.400,28.700 -1.100,25.500" fill="#444"/><polygon points="-1.100,21 9.400,24.500 9.400,25.600 -1.100,22.100" fill="#9a9a9a"/><circle cx="7.600" cy="26.600" r="0.700" fill="#5fdc5f"/></g><g fill="#17b5ef"><polygon points="-1.500,9.600 3.500,8.900 3.500,13 -1.500,13"/><polygon points="4.500,8.800 10.200,8 10.200,13 4.500,13"/><polygon points="-1.500,14 3.500,14 3.500,18.200 -1.500,17.500"/><polygon points="4.500,14 10.200,14 10.200,19.200 4.500,18.400"/></g></svg>
<svg style="left:1309px;top:746px;" width="12" height="18" viewBox="0 0 12 18"><path d="M2 2l7 7-7 7" fill="none" stroke="#a3a3a3" stroke-width="2.900"/></svg>
<span class="t" style="left:1374.50px;top:791px;font-size:23px;line-height:29px;color:#000;letter-spacing:-0.600px;">LENOVO (D:)</span>
<svg style="left:1340.9px;top:788px;" width="32" height="32" viewBox="0 0 32 32"><g transform="translate(0.0 0.0)"><polygon points="-1.100,21 13.400,15.600 27.200,18.500 27.200,23 9.400,28.700 -1.100,25.500" fill="#c9c9c9"/><polygon points="-1.100,21 13.400,15.600 27.200,18.500 9.400,24.500" fill="#e8e8e8"/><polygon points="9.400,24.500 27.200,18.500 27.200,23 9.400,28.700" fill="#b9b9b9"/><polygon points="-1.100,21 9.400,24.500 9.400,28.700 -1.100,25.500" fill="#444"/><polygon points="-1.100,21 9.400,24.500 9.400,25.600 -1.100,22.100" fill="#9a9a9a"/><circle cx="7.600" cy="26.600" r="0.700" fill="#5fdc5f"/></g></svg>
<svg style="left:1309px;top:794px;" width="12" height="18" viewBox="0 0 12 18"><path d="M2 2l7 7-7 7" fill="none" stroke="#a3a3a3" stroke-width="2.900"/></svg>
<span class="t" style="left:1374.50px;top:839px;font-size:23px;line-height:29px;color:#000;letter-spacing:-0.033px;">USBDisk1_Volume1 (\\Share) (X:)</span>
<svg style="left:1340.9px;top:836px;" width="32" height="32" viewBox="0 0 32 32"><g transform="translate(1.2 -5.4)"><polygon points="-1.100,21 13.400,15.600 27.200,18.500 27.200,23 9.400,28.700 -1.100,25.500" fill="#c9c9c9"/><polygon points="-1.100,21 13.400,15.600 27.200,18.500 9.400,24.500" fill="#e8e8e8"/><polygon points="9.400,24.500 27.200,18.500 27.200,23 9.400,28.700" fill="#b9b9b9"/><polygon points="-1.100,21 9.400,24.500 9.400,28.700 -1.100,25.500" fill="#444"/><polygon points="-1.100,21 9.400,24.500 9.400,25.600 -1.100,22.100" fill="#9a9a9a"/><circle cx="7.600" cy="26.600" r="0.700" fill="#5fdc5f"/></g><path d="M-1.600 21.900l13 3.900" stroke="#c4c4c4" stroke-width="3.800" stroke-linecap="round"/><path d="M6 21l0 3" stroke="#a9a9a9" stroke-width="2.500"/><path d="M15.700 17.400l12 12M27.700 17.400l-12 12" stroke="#d3141f" stroke-width="3.800"/></svg>
<svg style="left:1309px;top:842px;" width="12" height="18" viewBox="0 0 12 18"><path d="M2 2l7 7-7 7" fill="none" stroke="#a3a3a3" stroke-width="2.900"/></svg>
<span class="t" style="left:1374.50px;top:887px;font-size:23px;line-height:29px;color:#000;letter-spacing:0.062px;">MesFichiers (\\192.168.1.78) (Y:)</span>
<svg style="left:1340.9px;top:884px;" width="32" height="32" viewBox="0 0 32 32"><g transform="translate(1.2 -5.4)"><polygon points="-1.100,21 13.400,15.600 27.200,18.500 27.200,23 9.400,28.700 -1.100,25.500" fill="#c9c9c9"/><polygon points="-1.100,21 13.400,15.600 27.200,18.500 9.400,24.500" fill="#e8e8e8"/><polygon points="9.400,24.500 27.200,18.500 27.200,23 9.400,28.700" fill="#b9b9b9"/><polygon points="-1.100,21 9.400,24.500 9.400,28.700 -1.100,25.500" fill="#444"/><polygon points="-1.100,21 9.400,24.500 9.400,25.600 -1.100,22.100" fill="#9a9a9a"/><circle cx="7.600" cy="26.600" r="0.700" fill="#5fdc5f"/></g><path d="M-1.200 22l19.400 5.700" stroke="#d4d7d4" stroke-width="4" stroke-linecap="round"/><path d="M1.800 22.900l11.600 3.400" stroke="#4fbf5d" stroke-width="4"/><path d="M12.500 23.200l4-1.300" stroke="#4fbf5d" stroke-width="3"/><path d="M1.800 21.700l11.600 3.400" stroke="#8fe09a" stroke-width="1"/></svg>
<svg style="left:1309px;top:890px;" width="12" height="18" viewBox="0 0 12 18"><path d="M2 2l7 7-7 7" fill="none" stroke="#a3a3a3" stroke-width="2.900"/></svg>
<span class="t" style="left:1374.50px;top:935px;font-size:23px;line-height:29px;color:#000;letter-spacing:0.062px;">NosFichiers (\\192.168.1.78) (Z:)</span>
<svg style="left:1340.9px;top:932px;" width="32" height="32" viewBox="0 0 32 32"><g transform="translate(1.2 -5.4)"><polygon points="-1.100,21 13.400,15.600 27.200,18.500 27.200,23 9.400,28.700 -1.100,25.500" fill="#c9c9c9"/><polygon points="-1.100,21 13.400,15.600 27.200,18.500 9.400,24.500" fill="#e8e8e8"/><polygon points="9.400,24.500 27.200,18.500 27.200,23 9.400,28.700" fill="#b9b9b9"/><polygon points="-1.100,21 9.400,24.500 9.400,28.700 -1.100,25.500" fill="#444"/><polygon points="-1.100,21 9.400,24.500 9.400,25.600 -1.100,22.100" fill="#9a9a9a"/><circle cx="7.600" cy="26.600" r="0.700" fill="#5fdc5f"/></g><path d="M-1.200 22l19.400 5.700" stroke="#d4d7d4" stroke-width="4" stroke-linecap="round"/><path d="M1.800 22.900l11.600 3.400" stroke="#4fbf5d" stroke-width="4"/><path d="M12.500 23.200l4-1.300" stroke="#4fbf5d" stroke-width="3"/><path d="M1.800 21.700l11.600 3.400" stroke="#8fe09a" stroke-width="1"/></svg>
<svg style="left:1309px;top:938px;" width="12" height="18" viewBox="0 0 12 18"><path d="M2 2l7 7-7 7" fill="none" stroke="#a3a3a3" stroke-width="2.900"/></svg>
<span class="t" style="left:1358.80px;top:999px;font-size:23px;line-height:29px;color:#000;letter-spacing:-1.060px;">Réseau</span>
<svg style="left:1324.7px;top:996px;" width="32" height="32" viewBox="0 0 32 32"><circle cx="17.200" cy="11.400" r="10" fill="#3a81b4"/><path d="M10.500 6c2.500-3 5-3.500 7-3 .5 2-1.500 3-3 4.500s-1 3.500-3 4-2.500-1.500-1-5.500zM19 2c3 0 6 2 7.500 5.500-1.500 1-2.500-.5-4 0s-.5 3 1 4.500 2 3 1 5-3 .5-3-2-2.500-3-2.500-5.500 1.500-3 0-7.500z" fill="#bfe2ef" opacity="0.850"/><polygon points="12.800,24.200 16.500,25.300 16.500,27 12.800,26" fill="#b9bfc6"/><polygon points="5,25.500 8,24.600 16.500,27.200 13.500,28.500" fill="#dcdfe3" stroke="#bfc4ca" stroke-width="0.500"/><polygon points="0.300,9.400 18.600,14.400 18.600,26.700 0.300,20.700" fill="url(#gMon)" stroke="#1d6cab" stroke-width="1"/><polygon points="0.800,10.100 18.100,14.900 18.100,19 0.800,20" fill="#7fd4ff" opacity="0.350"/></svg>
<svg style="left:1289px;top:1006px;" width="18" height="12" viewBox="0 0 18 12"><path d="M1.800 1.800l7.200 7.200 7.200-7.200" fill="none" stroke="#3c3c3c" stroke-width="3.200"/></svg>
<span class="t" style="left:1374.50px;top:1047px;font-size:23px;line-height:29px;color:#000;letter-spacing:-1.600px;">YOGA_3</span>
<svg style="left:1340.9px;top:1044px;" width="32" height="32" viewBox="0 0 32 32"><polygon points="-2.8,23.4 4.6,21 21.7,25.8 14.2,28.8" fill="#e6e8eb"/><path d="M-1 23.7l15 4.500M1.500 22.800l15 4.600M4 22l15 4.600M1 24.800l6.500-2.600M5 26l6.500-2.600M9 27.200l6.500-2.600M12.500 28.300l6.500-2.600" stroke="#b3b8bf" stroke-width="0.700"/><polygon points="19.500,19.200 23.500,20.400 23.500,23 19.500,21.800" fill="#c3c8ce"/><polygon points="12.800,20.600 16,19.600 24.500,22 21.300,23.400" fill="#d5d8dd" stroke="#b5bac1" stroke-width="0.500"/><polygon points="7.300,2.200 27.200,8.400 27.200,21.700 7.300,15.300" fill="url(#gMon)" stroke="#1d6cab" stroke-width="1"/><polygon points="7.800,3 26.700,8.900 26.700,14 7.800,15" fill="#7fd4ff" opacity="0.350"/></svg>
<svg style="left:1309px;top:1050px;" width="12" height="18" viewBox="0 0 12 18"><path d="M2 2l7 7-7 7" fill="none" stroke="#a3a3a3" stroke-width="2.900"/></svg>
<span class="t" style="left:1358.80px;top:1111px;font-size:23px;line-height:29px;color:#000;letter-spacing:0.571px;">Groupe résidentiel</span>
<svg style="left:1324.7px;top:1108px;" width="32" height="32" viewBox="0 0 32 32"><circle cx="20.200" cy="5" r="3.200" fill="#1d6ab8"/><circle cx="3.600" cy="11.800" r="4.300" fill="#1f6fbf"/><circle cx="16.600" cy="13.900" r="6.700" fill="#35a852"/><circle cx="15" cy="12" r="3" fill="#6fd07f" opacity="0.550"/><circle cx="21.100" cy="21" r="5.500" fill="#1d6ab8"/><circle cx="20" cy="19.500" r="2.200" fill="#4f93da" opacity="0.600"/><circle cx="2.800" cy="10.800" r="1.600" fill="#4f93da" opacity="0.600"/></svg>
<svg style="left:1293px;top:1114px;" width="12" height="18" viewBox="0 0 12 18"><path d="M2 2l7 7-7 7" fill="none" stroke="#a3a3a3" stroke-width="2.900"/></svg>
<span class="t" style="left:1303.50px;top:1151px;font-size:23px;line-height:29px;color:#1e3264;letter-spacing:0.250px;">12 élément(s)</span>
<div style="left:1468px;top:1152px;width:1px;height:24px;background:#e4e4e4;"></div>
<span class="t" style="left:1491.00px;top:1151px;font-size:23px;line-height:29px;color:#1e3264;letter-spacing:0.550px;">1 élément sélectionné</span>
<span class="t" style="left:1740.00px;top:1151px;font-size:23px;line-height:29px;color:#1e3264;letter-spacing:0.100px;">241 Ko</span>
<div style="left:1835px;top:1152px;width:1px;height:24px;background:#e4e4e4;"></div>
</div>
</body></html>
